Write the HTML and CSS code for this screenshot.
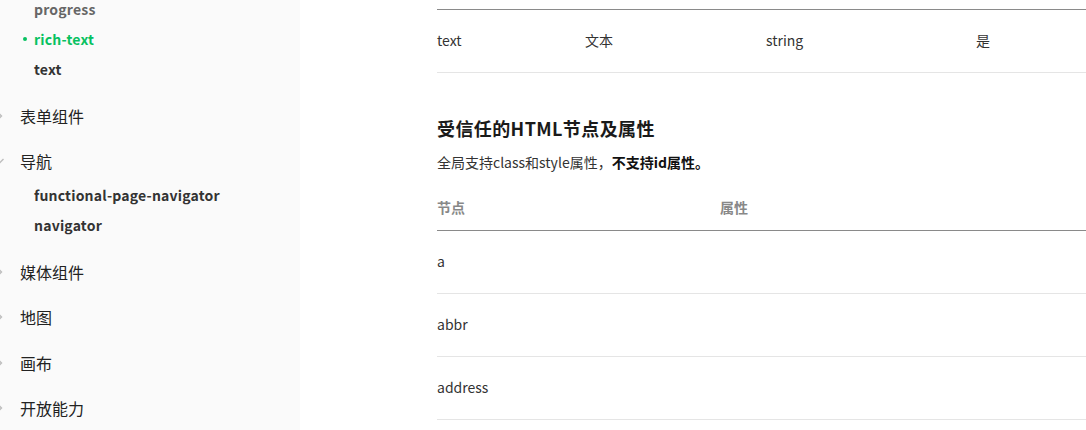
FILE: index.html
```html
<!DOCTYPE html>
<html lang="zh-CN">
<head>
<meta charset="utf-8">
<title>rich-text</title>
<link rel="stylesheet" href="styles.css">
</head>
<body>
<div class="page">
  <nav class="sidebar">
    <ul class="sub first">
      <li class="sub-item muted">progress</li>
      <li class="sub-item active">rich-text</li>
      <li class="sub-item">text</li>
    </ul>
    <div class="group"><svg class="caret" viewBox="0 0 10 10"><path d="M3 1.5 L6.5 5 L3 8.5" /></svg><span>表单组件</span></div>
    <div class="group"><svg class="caret" viewBox="0 0 10 10"><path d="M1.5 3 L5 6.5 L8.5 3" /></svg><span>导航</span></div>
    <ul class="sub">
      <li class="sub-item">functional-page-navigator</li>
      <li class="sub-item">navigator</li>
    </ul>
    <div class="group"><svg class="caret" viewBox="0 0 10 10"><path d="M3 1.5 L6.5 5 L3 8.5" /></svg><span>媒体组件</span></div>
    <div class="group"><svg class="caret" viewBox="0 0 10 10"><path d="M3 1.5 L6.5 5 L3 8.5" /></svg><span>地图</span></div>
    <div class="group"><svg class="caret" viewBox="0 0 10 10"><path d="M3 1.5 L6.5 5 L3 8.5" /></svg><span>画布</span></div>
    <div class="group"><svg class="caret" viewBox="0 0 10 10"><path d="M3 1.5 L6.5 5 L3 8.5" /></svg><span>开放能力</span></div>
  </nav>
  <main class="content">
    <table class="tbl props">
      <tbody>
        <tr><td class="c1">text</td><td class="c2">文本</td><td class="c3">string</td><td>是</td></tr>
      </tbody>
    </table>
    <h2 class="title">受信任的HTML节点及属性</h2>
    <p class="desc">全局支持class和style属性，<strong>不支持id属性。</strong></p>
    <table class="tbl nodes">
      <thead>
        <tr><th class="n1">节点</th><th>属性</th></tr>
      </thead>
      <tbody>
        <tr><td>a</td><td></td></tr>
        <tr><td>abbr</td><td></td></tr>
        <tr><td>address</td><td></td></tr>
      </tbody>
    </table>
  </main>
</div>
</body>
</html>
```
FILE: styles.css
```css
* { box-sizing: border-box; }
html, body {
  margin: 0;
  padding: 0;
  height: 430px;
  overflow: hidden;
  background: #fff;
}
body {
  font-family: "Noto Sans CJK SC", "Noto Sans", sans-serif;
  color: #333;
}
.page {
  display: flex;
  height: 430px;
}
.sidebar {
  width: 300px;
  flex: none;
  background: #fafafa;
  height: 430px;
  overflow: hidden;
}
.sub {
  list-style: none;
  margin: -4px 0 0;
  padding: 0 0 9px 34px;
}
.sub.first { margin-top: -6px; }
.sub-item {
  position: relative;
  height: 30px;
  line-height: 30px;
  font-size: 14px;
  font-weight: 700;
  letter-spacing: 0.2px;
  color: #333;
}
.sub-item.muted { color: #666; }
.sub-item.active { color: #07c160; }
.sub-item.active::before {
  content: "";
  position: absolute;
  left: -11px;
  top: 13px;
  width: 4px;
  height: 4px;
  border-radius: 50%;
  background: #07c160;
}
.group {
  display: flex;
  align-items: center;
  height: 45.5px;
  font-size: 16px;
  color: #222;
}
.caret {
  width: 10px;
  height: 10px;
  margin-left: -5px;
  margin-right: 15px;
  fill: none;
  stroke: #bdbdbd;
  stroke-width: 1.4;
}
.content {
  flex: 1;
  padding-left: 137px;
  padding-top: 9px;
}
.tbl {
  width: 100%;
  border-collapse: collapse;
  font-size: 14px;
}
.tbl td, .tbl th {
  text-align: left;
  padding: 0;
  vertical-align: middle;
}
.props { border-top: 1px solid #8a8a8a; }
.props td {
  height: 63px;
  padding-bottom: 2px;
  border-bottom: 1px solid #e5e5e5;
  color: #333;
}
.props .c1 { width: 148px; }
.props .c2 { width: 181px; }
.props .c3 { width: 210px; }
.title {
  margin: 41px 0 0;
  font-size: 18px;
  line-height: 28px;
  font-weight: 700;
  letter-spacing: 0.4px;
  color: #1a1a1a;
}
.desc {
  margin: 9px 0 0;
  font-size: 14px;
  line-height: 22px;
  color: #333;
}
.desc strong { color: #111; font-weight: 700; }
.nodes { margin-top: 13px; }
.nodes th {
  height: 44px;
  padding-bottom: 2px;
  font-weight: 700;
  color: #888;
  border-bottom: 1px solid #8a8a8a;
}
.nodes .n1 { width: 283px; }
.nodes td {
  height: 63px;
  padding-bottom: 2px;
  border-bottom: 1px solid #e5e5e5;
  color: #333;
}
```
